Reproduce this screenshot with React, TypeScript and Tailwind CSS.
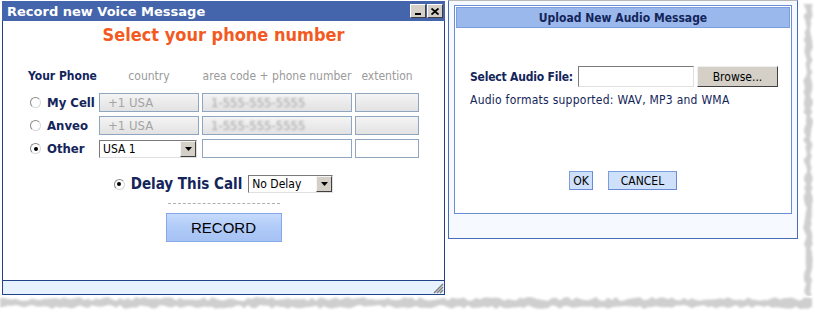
import React from 'react';

const ui = "font-['DejaVu_Sans_Condensed','DejaVu_Sans',sans-serif]";

// deterministic jitter for the torn paper edge
function rnd(i: number) {
  const x = Math.sin(i * 12.9898 + 78.233) * 43758.5453;
  return x - Math.floor(x);
}

function TornBottom() {
  const top: string[] = [];
  const bot: string[] = [];
  for (let x = 0; x <= 815; x += 4) {
    top.push(`${x},${(1 + rnd(x) * 4).toFixed(1)}`);
    bot.push(`${x},${(9 + rnd(x + 999) * 4).toFixed(1)}`);
  }
  const d = `M${top.join(' L')} L${bot.reverse().join(' L')} Z`;
  return (
    <svg width="815" height="16" className="block">
      <defs>
        <filter id="b1"><feGaussianBlur stdDeviation="1" /></filter>
      </defs>
      <path d={d} fill="#cfcfcf" filter="url(#b1)" />
    </svg>
  );
}

function TornRight() {
  const l: string[] = [];
  const r: string[] = [];
  for (let y = 4; y <= 296; y += 4) {
    l.push(`${(3 + rnd(y + 50) * 4).toFixed(1)},${y}`);
    r.push(`${(10 + rnd(y + 500) * 3).toFixed(1)},${y}`);
  }
  const d = `M${l.join(' L')} L${r.reverse().join(' L')} Z`;
  return (
    <svg width="15" height="296" className="block shrink-0">
      <defs>
        <filter id="b2"><feGaussianBlur stdDeviation="1" /></filter>
      </defs>
      <path d={d} fill="#cfcfcf" filter="url(#b2)" />
    </svg>
  );
}

function Radio({ on }: { on?: boolean }) {
  return (
    <span className="w-[11px] h-[11px] rounded-full border border-[#8a8a8a] border-r-[#d8d8d8] border-b-[#d8d8d8] bg-white flex items-center justify-center shrink-0">
      {on && <span className="w-[4px] h-[4px] rounded-full bg-black" />}
    </span>
  );
}

function Select({ value, w }: { value: string; w: string }) {
  return (
    <div className={`${w} h-[18px] flex items-center border border-[#7a7a7a] border-r-[#e0e0e0] border-b-[#e0e0e0] bg-white`}>
      <span className="flex-1 pl-[3px] text-[12px] text-black leading-none font-['DejaVu_Sans_Condensed','DejaVu_Sans',sans-serif]">{value}</span>
      <span className="w-[16px] h-[16px] bg-[#d4d0c8] border border-[#f4f4f4] border-r-[#404040] border-b-[#404040] flex items-center justify-center">
        <svg width="7" height="4" viewBox="0 0 7 4"><path d="M0 0H7L3.5 4Z" fill="#000" /></svg>
      </span>
    </div>
  );
}

function Disabled({ children, blur }: { children?: React.ReactNode; blur?: boolean }) {
  return (
    <div className="h-[19px] border border-[#8fa6c0] bg-gradient-to-b from-[#f4f4f4] to-[#e2e2e2] flex items-center pl-[8px] overflow-hidden">
      <span className={`text-[13px] text-[#a4a4a4] leading-none ${blur ? 'blur-[1.2px] text-[#9a9a9a]' : ''}`}>{children}</span>
    </div>
  );
}

function Empty() {
  return <div className="h-[19px] border border-[#8fa6c0] bg-white" />;
}

function Label({ on, children }: { on?: boolean; children: React.ReactNode }) {
  return (
    <div className="h-[19px] flex items-center gap-[6px] pl-[2px] text-[13px] font-bold text-[#13255a] leading-none whitespace-nowrap overflow-hidden">
      <Radio on={on} />
      {children}
    </div>
  );
}

function LeftWindow() {
  return (
    <div className="w-[444px] ml-[2px] h-[295px] flex flex-col">
      {/* title bar */}
      <div className="mt-[1px] h-[20px] bg-[#4465ab] flex items-center pl-[5px] pr-[2px]">
        <span className="flex-1 text-white font-bold text-[13px] font-['DejaVu_Sans',sans-serif] leading-none">Record new Voice Message</span>
        <span className="w-[16px] h-[14px] bg-[#d4d0c8] border border-[#ffffff] border-r-[#404040] border-b-[#404040] flex items-end justify-center pb-[2px]">
          <span className="w-[6px] h-[2px] bg-black" />
        </span>
        <span className="w-[16px] h-[14px] ml-[1px] bg-[#d4d0c8] border border-[#ffffff] border-r-[#404040] border-b-[#404040] flex items-center justify-center">
          <svg width="8" height="7" viewBox="0 0 8 7"><path d="M0.5 0.5L7.5 6.5M7.5 0.5L0.5 6.5" stroke="#000" strokeWidth="1.8" /></svg>
        </span>
      </div>
      {/* body */}
      <div className={`flex-1 border-x border-[#22428a] bg-white flex flex-col ${ui}`}>
        <div className="h-[28px] flex items-center justify-center text-[18px] font-bold text-[#f25a22] leading-none">Select your phone number</div>
        <div className="mt-[18px] pl-[25px] grid grid-cols-[68px_100px_150px_64px] gap-x-[3px] gap-y-[4px] items-center">
          <div className="h-[18px] flex items-center text-[12px] font-bold text-[#13255a] leading-none whitespace-nowrap">Your Phone</div>
          <div className="h-[18px] flex items-center justify-center text-[12px] text-[#9a9a9a] leading-none">country</div>
          <div className="h-[18px] flex items-center justify-center text-[12px] text-[#9a9a9a] leading-none whitespace-nowrap">area code + phone number</div>
          <div className="h-[18px] flex items-center justify-center text-[12px] text-[#9a9a9a] leading-none">extention</div>

          <div className="mt-[4px]"><Label>My Cell</Label></div>
          <div className="mt-[4px]"><Disabled>+1 USA</Disabled></div>
          <div className="mt-[4px]"><Disabled blur>1-555-555-5555</Disabled></div>
          <div className="mt-[4px]"><Disabled /></div>

          <Label>Anveo</Label>
          <Disabled>+1 USA</Disabled>
          <Disabled blur>1-555-555-5555</Disabled>
          <Disabled />

          <Label on>Other</Label>
          <Select value="USA 1" w="w-[98px]" />
          <Empty />
          <Empty />
        </div>
        <div className="mt-[17px] h-[18px] flex items-center justify-center">
          <Radio on />
          <span className="ml-[6px] text-[15px] font-bold text-[#13255a] leading-none">Delay This Call</span>
          <span className="ml-[6px]"><Select value="No Delay" w="w-[85px]" /></span>
        </div>
        <div className="mt-[10px] mx-auto w-[112px] border-t border-dashed border-[#b0b0b0]" />
        <div className="mt-[9px] mx-auto w-[116px] h-[29px] border border-[#86a9ea] bg-gradient-to-b from-[#c6dafc] via-[#b0cbf7] to-[#a6c2f4] flex items-center justify-center text-[15px] text-black font-['Liberation_Sans',sans-serif] leading-none">RECORD</div>
      </div>
      {/* status bar */}
      <div className="h-[15px] border border-[#22428a] bg-[#e8f2fe] flex justify-end items-end">
        <svg width="12" height="12" viewBox="0 0 12 12">
          <path d="M11 2L2 11M11 5L5 11M11 8L8 11" stroke="#808080" strokeWidth="1.5" />
        </svg>
      </div>
    </div>
  );
}

function UploadPanel() {
  return (
    <div className={`w-[350px] h-[239px] border border-[#4a6cb8] border-t-[#b8b8b8] bg-[#f6f9ff] px-[5px] pt-[4px] ${ui}`}>
      <div className="h-[209px] border border-[#6b8dd3] bg-white p-[1px] flex flex-col">
        <div className="h-[21px] bg-[#9ab8ec] border border-[#7c9de0] flex items-center justify-center text-[12px] font-bold text-[#13255a]">Upload New Audio Message</div>
        <div className="mt-[38px] pl-[14px] flex items-center">
          <span className="text-[12px] font-bold text-[#13255a] w-[108px] tracking-[-0.2px]">Select Audio File:</span>
          <div className="w-[116px] h-[21px] border border-[#7a7a7a] border-r-[#e0e0e0] border-b-[#e0e0e0] bg-white" />
          <div className="ml-[3px] w-[81px] h-[21px] bg-[#d4d0c8] border border-[#f0f0f0] border-r-[#404040] border-b-[#404040] flex items-center justify-center text-[12px] text-black">Browse...</div>
        </div>
        <div className="mt-[4px] pl-[14px] text-[12px] text-[#13255a] tracking-[0.25px]">Audio formats supported: WAV, MP3 and WMA</div>
        <div className="mt-[62px] flex justify-center gap-[15px]">
          <div className="w-[24px] h-[19px] border border-[#7c9de0] border-r-[#6a8ad8] border-b-[#6a8ad8] bg-[#cfe0fb] flex items-center justify-center text-[12px] text-black">OK</div>
          <div className="w-[69px] h-[19px] border border-[#7c9de0] border-r-[#6a8ad8] border-b-[#6a8ad8] bg-[#cfe0fb] flex items-center justify-center text-[12px] text-black">CANCEL</div>
        </div>
      </div>
    </div>
  );
}

export default function App() {
  return (
    <div className="w-[815px] h-[312px] bg-white overflow-hidden">
      <div className="flex h-[296px]">
        <LeftWindow />
        <div className="ml-[3px]">
          <UploadPanel />
        </div>
        <div className="ml-[2px]">
          <TornRight />
        </div>
      </div>
      <TornBottom />
    </div>
  );
}
